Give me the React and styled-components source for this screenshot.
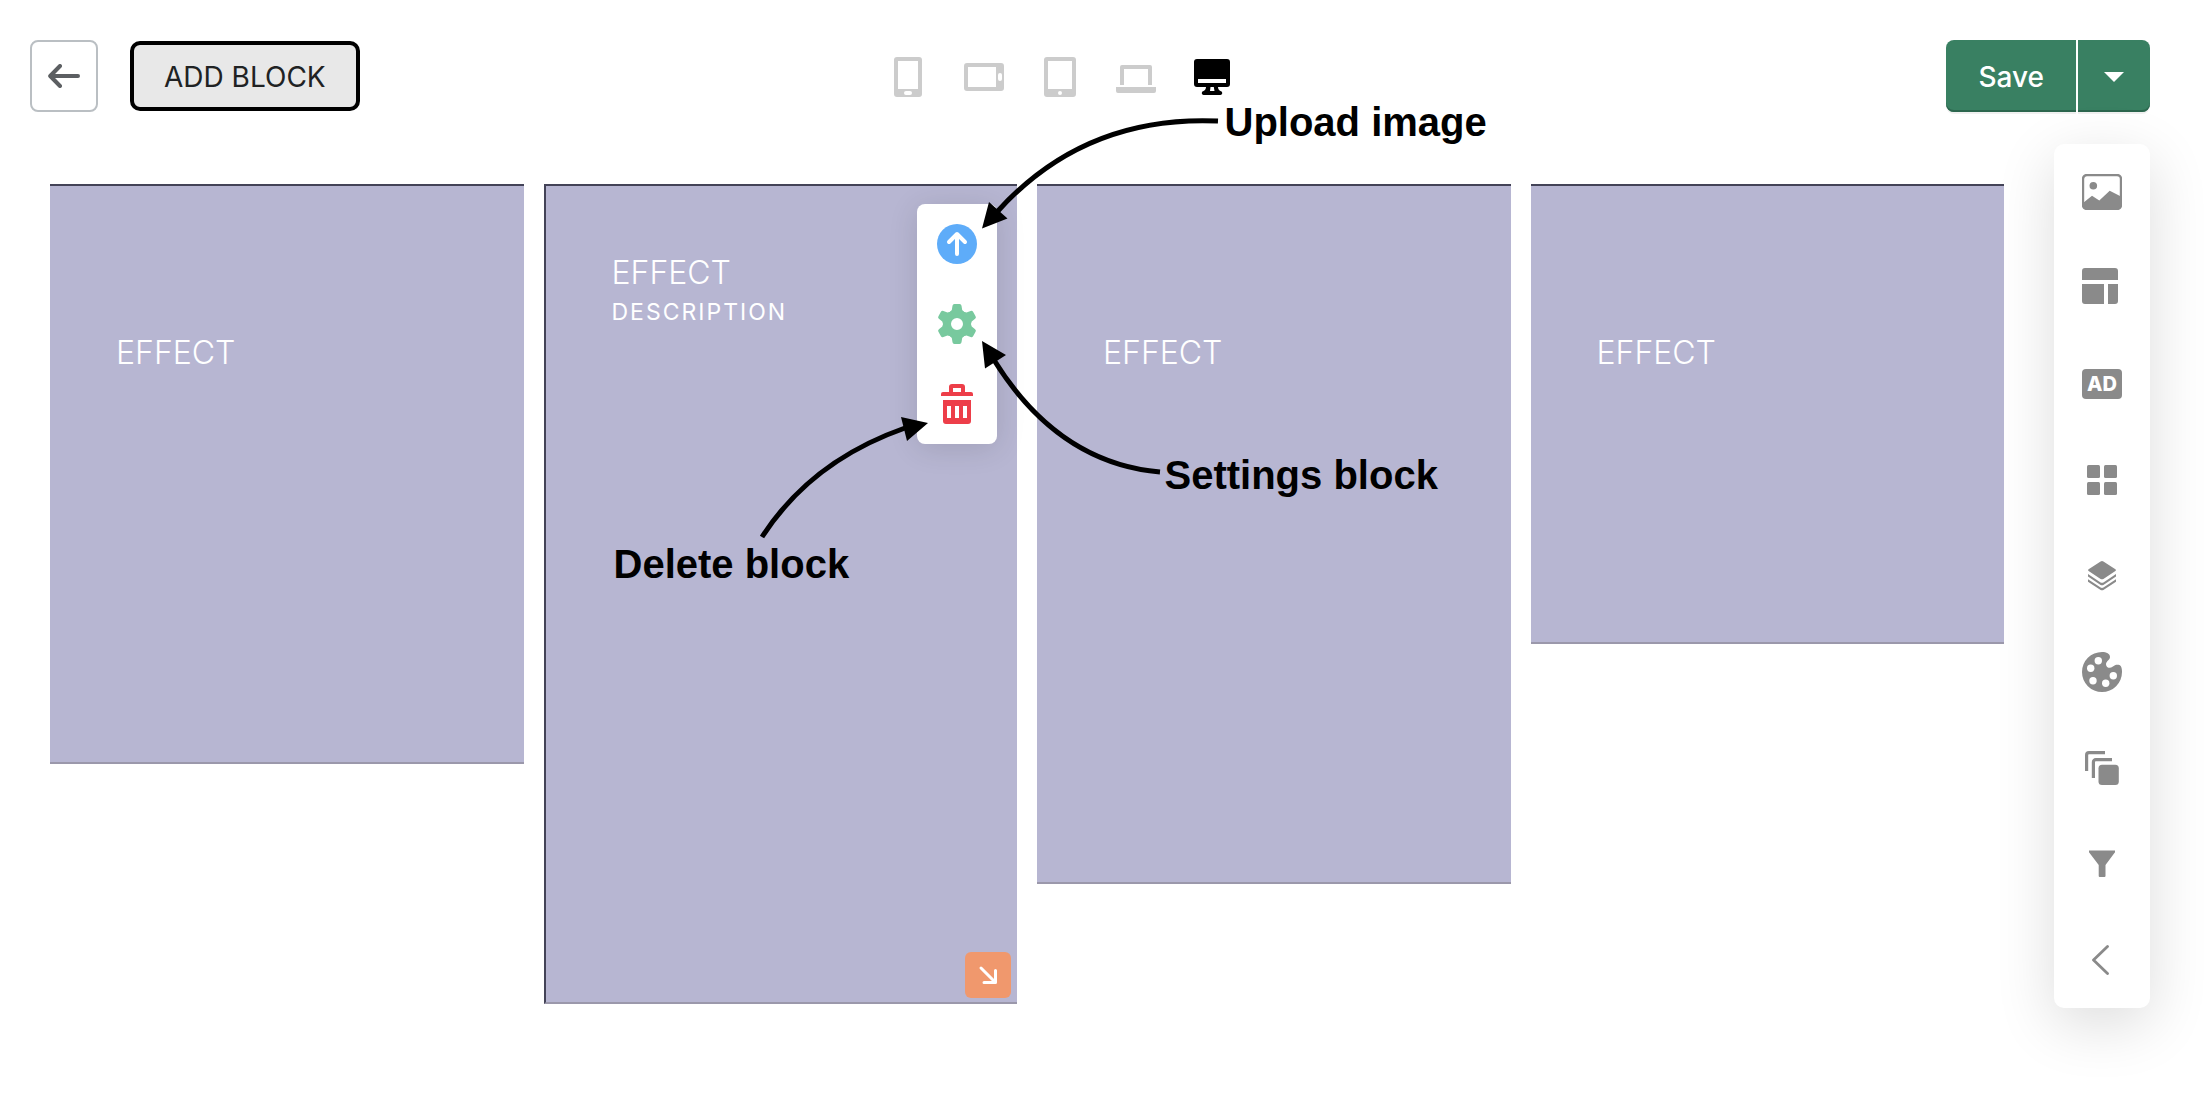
import React from "react";
import styled, { createGlobalStyle } from "styled-components";

const GlobalStyle = createGlobalStyle`
  *, *::before, *::after { box-sizing: border-box; }
  body {
    margin: 0;
    background: #fff;
    font-family: Inter, Roboto, "Liberation Sans", sans-serif;
    -webkit-font-smoothing: antialiased;
  }
  button { font: inherit; margin: 0; padding: 0; border: 0; background: none; cursor: pointer; }
  h2, p { margin: 0; font-weight: inherit; }
  svg { display: block; flex: none; }
`;

const Page = styled.div`
  min-height: 100vh;
  display: flex;
  flex-direction: column;
  overflow-x: hidden;
`;

const Header = styled.header`
  display: grid;
  grid-template-columns: 1fr auto 1fr;
  align-items: center;
  padding: 40px 56px 0 30px;
`;

const Actions = styled.div`
  display: flex;
  align-items: center;
  gap: 32px;
`;

const BackButton = styled.button`
  display: grid;
  place-items: center;
  width: 68px;
  height: 72px;
  border: 2px solid #babfc3;
  border-radius: 8px;
  color: #5c5f62;
`;

const AddButton = styled.button`
  height: 70px;
  padding: 2px 30px 0;
  border: 4px solid #000;
  border-radius: 10px;
  background: #e8e8e8;
  color: #202223;
  font-size: 28px;
  line-height: 40px;
`;

const Devices = styled.div`
  display: flex;
  gap: 36px;
  padding: 2px 60px 0 0;
`;

const DeviceButton = styled.button`
  width: 40px;
  height: 40px;
  color: ${(p) => (p.$active ? "#000" : "#ccc")};
`;

const SaveGroup = styled.div`
  display: flex;
  justify-self: end;
  gap: 2px;
`;

const SaveButton = styled.button`
  display: grid;
  place-items: center;
  height: 72px;
  padding: 2px 32px 0;
  border-radius: 8px 0 0 8px;
  background: #398062;
  color: #fff;
  font-size: 28px;
  font-weight: 500;
  box-shadow: 0 2px 0 rgba(0, 0, 0, 0.06), inset 0 -2px 0 #2c664e;
`;

const SaveMenuButton = styled(SaveButton)`
  width: 72px;
  padding: 2px 0 0;
  border-radius: 0 8px 8px 0;
`;

const Main = styled.main`
  flex: 1;
  display: flex;
  align-items: flex-start;
  padding: 32px 56px 92px 50px;
`;

const Canvas = styled.section`
  flex: 1;
  display: grid;
  grid-template-columns: repeat(4, 1fr);
  align-items: start;
  gap: 20px;
  padding: 40px 50px 0 0;
`;

const Block = styled.article`
  position: relative;
  z-index: ${(p) => (p.$selected ? 1 : 0)};
  height: ${(p) => p.$height}px;
  padding: ${(p) => (p.$selected ? 67 : 147)}px 66px 0;
  border: 0 solid #434357;
  border-top-width: 2px;
  border-bottom: 2px solid #9b98ab;
  border-left-width: ${(p) => (p.$selected ? 2 : 0)}px;
  background: #b7b6d2;
  color: #fff;
`;

const BlockTitle = styled.h2`
  font-size: 32px;
  line-height: 40px;
  font-weight: 300;
`;

const BlockText = styled.p`
  font-size: 23px;
  line-height: 38px;
  letter-spacing: 2px;
`;

const BlockMenu = styled.div`
  position: absolute;
  top: 18px;
  right: 20px;
  display: flex;
  flex-direction: column;
  border-radius: 8px;
  background: #fff;
  box-shadow: 0 4px 30px rgba(0, 0, 0, 0.12);
`;

const BlockMenuButton = styled.button`
  display: grid;
  place-items: center;
  width: 80px;
  height: 80px;
  color: ${(p) => p.$color};
`;

const ResizeButton = styled.button`
  position: absolute;
  right: 6px;
  bottom: 4px;
  width: 46px;
  height: 46px;
  border-radius: 6px;
  background: #f0986d;
  color: #fff;
`;

const Arrows = styled.svg`
  position: absolute;
  top: -2px;
  left: -2px;
  overflow: visible;
  pointer-events: none;
`;

const Note = styled.span`
  position: absolute;
  left: ${(p) => p.$left}px;
  top: ${(p) => p.$top}px;
  color: #000;
  font: 700 40px/48px "Liberation Sans", Arial, sans-serif;
  white-space: nowrap;
`;

const Sidebar = styled.nav`
  display: flex;
  flex-direction: column;
  border-radius: 10px;
  background: #fff;
  color: #8a8a8a;
  box-shadow: 0 16px 60px rgba(0, 0, 0, 0.14);
`;

const SideButton = styled.button`
  display: grid;
  place-items: center;
  width: 96px;
  height: 96px;
  color: inherit;
`;

const AdBadge = styled.span`
  display: grid;
  place-items: center;
  width: 40px;
  height: 30px;
  border-radius: 4px;
  background: #8a8a8a;
  color: #fff;
  font-size: 20px;
  line-height: 30px;
  font-weight: 800;
`;

const Svg = ({ w, h, children, ...rest }) => (
  <svg width={w} height={h} viewBox={`0 0 ${w} ${h}`} fill="currentColor" aria-hidden="true" {...rest}>
    {children}
  </svg>
);

const BackIcon = () => (
  <Svg w={32} h={24} fill="none" stroke="currentColor" strokeWidth="4" strokeLinecap="round" strokeLinejoin="round">
    <path d="M2.5 12H30M12 2L2.2 12L12 22" />
  </Svg>
);

const PhoneIcon = () => (
  <Svg w={40} h={40} fillRule="evenodd">
    <path d="M9 0h22a3 3 0 0 1 3 3v34a3 3 0 0 1-3 3H9a3 3 0 0 1-3-3V3a3 3 0 0 1 3-3zM10 4v28h20V4zM18 34a2 2 0 0 0 0 4h4a2 2 0 0 0 0-4z" />
  </Svg>
);

const PhoneWideIcon = () => (
  <Svg w={40} h={40} fillRule="evenodd">
    <path d="M3 6h34a3 3 0 0 1 3 3v22a3 3 0 0 1-3 3H3a3 3 0 0 1-3-3V9a3 3 0 0 1 3-3zM4 10v20h28V10zM34 18v4a2 2 0 0 0 4 0v-4a2 2 0 0 0-4 0z" />
  </Svg>
);

const TabletIcon = () => (
  <Svg w={40} h={40} fillRule="evenodd">
    <path d="M7 0h26a3 3 0 0 1 3 3v34a3 3 0 0 1-3 3H7a3 3 0 0 1-3-3V3a3 3 0 0 1 3-3zM8 4v28h24V4zM18 36a2 2 0 0 0 4 0a2 2 0 0 0-4 0z" />
  </Svg>
);

const LaptopIcon = () => (
  <Svg w={40} h={40}>
    <path d="M4 28V10a2 2 0 0 1 2-2h28a2 2 0 0 1 2 2v18h-4V12H8v16zM0 30h40v4a2 2 0 0 1-2 2H2a2 2 0 0 1-2-2z" />
  </Svg>
);

const DesktopIcon = () => (
  <Svg w={40} h={40} fillRule="evenodd">
    <path d="M5 2h30a3 3 0 0 1 3 3v22a3 3 0 0 1-3 3h-9c0 1.500.6 3 2.500 4a2 2 0 0 1-.5 4H12a2 2 0 0 1-.5-4C13.400 33 14 31.500 14 30H5a3 3 0 0 1-3-3V5a3 3 0 0 1 3-3zM6 22v4h28v-4zM18.500 30l-.5 4h4.500l-.7-4z" />
  </Svg>
);

const CaretIcon = () => (
  <Svg w={20} h={10}>
    <path d="M0 0h20L10 10z" />
  </Svg>
);

const UploadIcon = () => (
  <Svg w={40} h={40}>
    <circle cx="20" cy="20" r="20" />
    <path d="M20 30V11M12 18l8-8 8 8" fill="none" stroke="#fff" strokeWidth="4" strokeLinecap="round" strokeLinejoin="round" />
  </Svg>
);

const GearIcon = () => (
  <Svg w={40} h={40}>
    <circle cx="20" cy="20" r="10" fill="none" stroke="currentColor" strokeWidth="8" />
    {[0, 60, 120, 180, 240, 300].map((angle) => (
      <path key={angle} transform={`rotate(${angle} 20 20)`} d="M17.500 0h5a2 2 0 0 1 2 1.700L25.200 6L28 9L24 11h-8l-4-2L14.800 6l.7-4.300a2 2 0 0 1 2-1.700z" />
    ))}
  </Svg>
);

const TrashIcon = () => (
  <Svg w={32} h={40} fillRule="evenodd">
    <path d="M8 8V3a3 3 0 0 1 3-3h10a3 3 0 0 1 3 3v5h6a2 2 0 0 1 2 2v2H0v-2a2 2 0 0 1 2-2zM12 4v4h8V4zM2 16h28v21a3 3 0 0 1-3 3H5a3 3 0 0 1-3-3zM6 22v12h4V22zM14 22v12h4V22zM22 22v12h4V22z" />
  </Svg>
);

const ResizeIcon = () => (
  <Svg w={46} h={46} fill="none" stroke="currentColor" strokeWidth="3" strokeLinecap="round" strokeLinejoin="round">
    <path d="M16 16l14 14M30.500 18.500v12H19" />
  </Svg>
);

const ImageIcon = () => (
  <Svg w={40} h={36}>
    <rect x="1" y="1" width="38" height="34" rx="4" fill="none" stroke="currentColor" strokeWidth="2.400" />
    <circle cx="11.300" cy="11.700" r="3.800" />
    <path d="M1 29l9-7.300 7.300 4.800 10.400-9.800L39 22.500V32a3 3 0 0 1-3 3H4a3 3 0 0 1-3-3z" />
  </Svg>
);

const LayoutIcon = () => (
  <Svg w={40} h={40}>
    <path d="M3 0h30a3 3 0 0 1 3 3v9H0V3a3 3 0 0 1 3-3zM0 16h22v20H3a3 3 0 0 1-3-3zM26 16h10v17a3 3 0 0 1-3 3h-7z" />
  </Svg>
);

const GridIcon = () => (
  <Svg w={30} h={30}>
    <rect width="13" height="13" rx="1.500" />
    <rect x="17" width="13" height="13" rx="1.500" />
    <rect y="17" width="13" height="13" rx="1.500" />
    <rect x="17" y="17" width="13" height="13" rx="1.500" />
  </Svg>
);

const LayersIcon = () => (
  <Svg w={28} h={30}>
    <path d="M12.600.5a2.500 2.500 0 0 1 2.800 0L27.400 8.300a1 1 0 0 1 0 1.600L15.400 17.900a2.500 2.500 0 0 1-2.800 0L.6 9.900a1 1 0 0 1 0-1.600z" />
    <path d="M0 13l12.600 8.400a2.500 2.500 0 0 0 2.800 0L28 13v2.500l-12.600 8.400a2.500 2.500 0 0 1-2.800 0L0 15.500zM0 18.200l12.600 8.400a2.500 2.500 0 0 0 2.800 0L28 18.200v2.500l-12.600 8.200a2.500 2.500 0 0 1-2.800 0L0 20.700z" />
  </Svg>
);

const PaletteIcon = () => (
  <Svg w={40} h={40}>
    <path d="M20 0C24.500 0 28 1.800 28 5C28 8 24 9 24 12.200C24 15.500 28 17 30.500 14.800C33 12.400 35.500 12.400 37.500 13C39.500 14 40 17 40 20A20 20 0 1 1 20 0z" />
    <g fill="#fff">
      <circle cx="16.300" cy="8.700" r="3.700" />
      <circle cx="8.700" cy="16.300" r="3.700" />
      <circle cx="11" cy="28.700" r="3.700" />
      <circle cx="23.700" cy="31.300" r="3.700" />
      <circle cx="31.300" cy="23.700" r="3.700" />
    </g>
  </Svg>
);

const StackIcon = () => (
  <Svg w={34} h={34}>
    <path d="M1.600 20V4a2.400 2.400 0 0 1 2.400-2.400h16M8.400 27V11a2.400 2.400 0 0 1 2.400-2.400H27" fill="none" stroke="currentColor" strokeWidth="3.200" />
    <rect x="13.500" y="13.700" width="20.300" height="20.300" rx="3.500" />
  </Svg>
);

const FilterIcon = () => (
  <Svg w={26} h={28}>
    <path d="M1 .5h24a1 1 0 0 1 .8 2L16.500 15v11a1 1 0 0 1-1 1h-4.800a1 1 0 0 1-1-1V15L.2 2.500a1 1 0 0 1 .8-2z" />
  </Svg>
);

const ChevronIcon = () => (
  <Svg w={20} h={32} fill="none" stroke="currentColor" strokeWidth="2.800" strokeLinecap="round" strokeLinejoin="round">
    <path d="M15.500 2.400L1.500 16l14 13.600" />
  </Svg>
);

const devices = [
  { name: "Phone", Icon: PhoneIcon },
  { name: "Phone landscape", Icon: PhoneWideIcon },
  { name: "Tablet", Icon: TabletIcon },
  { name: "Laptop", Icon: LaptopIcon },
  { name: "Desktop", Icon: DesktopIcon },
];

const tools = [
  { name: "Images", Icon: ImageIcon },
  { name: "Layout", Icon: LayoutIcon },
  { name: "Banner", Icon: () => <AdBadge>AD</AdBadge> },
  { name: "Grid", Icon: GridIcon },
  { name: "Layers", Icon: LayersIcon },
  { name: "Colors", Icon: PaletteIcon },
  { name: "Duplicate", Icon: StackIcon },
  { name: "Filter", Icon: FilterIcon },
  { name: "Collapse", Icon: ChevronIcon },
];

const BlockGuide = () => (
  <>
    <Arrows width="474" height="820" viewBox="0 0 474 820" aria-hidden="true">
      <g fill="none" stroke="#000" strokeWidth="5">
        <path d="M674 -63Q540 -69 453 28" />
        <path d="M616 288Q514 279 450 176" />
        <path d="M218 353Q267 277 361 244" />
      </g>
      <path d="M438 44.500L445 18L463.500 34.500zM438 157L462 171L441 184.500zM384 239L357 233L363 257z" />
    </Arrows>
    <Note $left={679} $top={-88}>Upload image</Note>
    <Note $left={619} $top={265}>Settings block</Note>
    <Note $left={68} $top={354}>Delete block</Note>
  </>
);

export default function App() {
  const [device, setDevice] = React.useState("Desktop");

  return (
    <Page>
      <GlobalStyle />
      <Header>
        <Actions>
          <BackButton aria-label="Back"><BackIcon /></BackButton>
          <AddButton>ADD BLOCK</AddButton>
        </Actions>
        <Devices>
          {devices.map(({ name, Icon }) => (
            <DeviceButton
              key={name}
              aria-label={name}
              aria-pressed={device === name}
              $active={device === name}
              onClick={() => setDevice(name)}
            >
              <Icon />
            </DeviceButton>
          ))}
        </Devices>
        <SaveGroup>
          <SaveButton>Save</SaveButton>
          <SaveMenuButton aria-label="More save options"><CaretIcon /></SaveMenuButton>
        </SaveGroup>
      </Header>
      <Main>
        <Canvas>
          <Block $height={580}>
            <BlockTitle>EFFECT</BlockTitle>
          </Block>
          <Block $height={820} $selected>
            <BlockTitle>EFFECT</BlockTitle>
            <BlockText>DESCRIPTION</BlockText>
            <BlockMenu>
              <BlockMenuButton aria-label="Upload image" $color="#5eacf9"><UploadIcon /></BlockMenuButton>
              <BlockMenuButton aria-label="Settings block" $color="#78c99e"><GearIcon /></BlockMenuButton>
              <BlockMenuButton aria-label="Delete block" $color="#ed3e49"><TrashIcon /></BlockMenuButton>
            </BlockMenu>
            <ResizeButton aria-label="Resize block"><ResizeIcon /></ResizeButton>
            <BlockGuide />
          </Block>
          <Block $height={700}>
            <BlockTitle>EFFECT</BlockTitle>
          </Block>
          <Block $height={460}>
            <BlockTitle>EFFECT</BlockTitle>
          </Block>
        </Canvas>
        <Sidebar aria-label="Editor tools">
          {tools.map(({ name, Icon }) => (
            <SideButton key={name} aria-label={name}><Icon /></SideButton>
          ))}
        </Sidebar>
      </Main>
    </Page>
  );
}
